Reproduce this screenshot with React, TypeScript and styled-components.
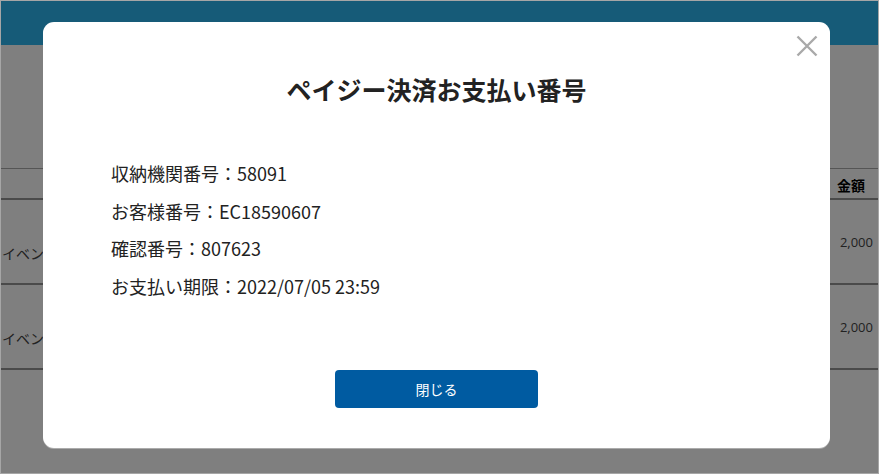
import React from "react";
import styled, { createGlobalStyle } from "styled-components";

const Global = createGlobalStyle`
  html, body { margin: 0; padding: 0; background: #fff; }
  body { font-family: "Noto Sans CJK JP", "Noto Sans", sans-serif; }
  * { box-sizing: border-box; }
`;

const Frame = styled.div`
  position: relative;
  width: 879px;
  height: 474px;
  border: 1px solid #a6a6a6;
  overflow: hidden;
  background: #fff;
`;

const Page = styled.div`
  display: flex;
  flex-direction: column;
  height: 100%;
`;

const Header = styled.header`
  height: 44px;
  background: #2cb6f0;
`;

const Spacer = styled.div`
  height: 123px;
`;

const Table = styled.div`
  display: flex;
  flex-direction: column;
  border-top: 1px solid #aaa;
`;

const Row = styled.div<{ $head?: boolean }>`
  display: flex;
  align-items: center;
  justify-content: space-between;
  height: ${(p) => (p.$head ? "31px" : "85px")};
  padding-top: ${(p) => (p.$head ? "3px" : "0")};
  border-bottom: 2px solid #959595;
  font-size: ${(p) => (p.$head ? "14px" : "13px")};
  font-weight: ${(p) => (p.$head ? 600 : 400)};
  color: ${(p) => (p.$head ? "#000" : "#444")};
`;

const NameCell = styled.span`
  padding-left: 1px;
  margin-top: 22px;
  font-size: 14px;
  white-space: nowrap;
  font-family: "Noto Sans CJK JP", sans-serif;
`;

const AmountCell = styled.span<{ $head?: boolean }>`
  padding-right: ${(p) => (p.$head ? "13px" : "5px")};
  font-family: ${(p) => (p.$head ? `"Noto Sans CJK JP", sans-serif` : `"Open Sans", sans-serif`)};
`;

const Overlay = styled.div`
  position: absolute;
  inset: 0;
  background: rgba(0, 0, 0, 0.5);
  padding: 21px 48px 25px 42px;
  display: flex;
`;

const Modal = styled.div`
  position: relative;
  flex: 1;
  background: #fff;
  border-radius: 11px;
  box-shadow: 0 1px 0 rgba(255, 255, 255, 0.35);
  padding: 49px 68px 40px;
  display: flex;
  flex-direction: column;
  color: #222;
`;

const CloseButton = styled.button`
  position: absolute;
  top: 13px;
  right: 12px;
  width: 22px;
  height: 22px;
  padding: 0;
  border: none;
  background: transparent;
  cursor: pointer;
  display: flex;
`;

const Title = styled.h2`
  margin: 0;
  text-align: center;
  font-size: 25px;
  line-height: 36px;
  font-weight: 700;
  color: #222;
`;

const InfoList = styled.div`
  margin-top: 48px;
  display: flex;
  flex-direction: column;
`;

const InfoLine = styled.div`
  font-size: 18px;
  line-height: 37.5px;
  color: #222;
`;

const Footer = styled.div`
  margin-top: auto;
  display: flex;
  justify-content: center;
`;

const PrimaryButton = styled.button`
  width: 203px;
  height: 38px;
  border: none;
  border-radius: 4px;
  background: #005ba1;
  color: #fff;
  font-family: "Noto Sans CJK JP", sans-serif;
  font-size: 14px;
  cursor: pointer;
`;

const CloseIcon = () => (
  <svg width="22" height="22" viewBox="0 0 22 22">
    <path d="M1.5 1.5 L20.5 20.5 M20.5 1.5 L1.5 20.5" stroke="#a9a9a9" strokeWidth="2.4" fill="none" />
  </svg>
);

const rows = [
  { name: "イベント", amount: "2,000" },
  { name: "イベント", amount: "2,000" },
];

const info = [
  "収納機関番号：58091",
  "お客様番号：EC18590607",
  "確認番号：807623",
  "お支払い期限：2022/07/05 23:59",
];

export default function App() {
  return (
    <>
      <Global />
      <Frame>
        <Page>
          <Header />
          <Spacer />
          <Table>
            <Row $head>
              <NameCell />
              <AmountCell $head>金額</AmountCell>
            </Row>
            {rows.map((r, i) => (
              <Row key={i}>
                <NameCell>{r.name}</NameCell>
                <AmountCell>{r.amount}</AmountCell>
              </Row>
            ))}
          </Table>
        </Page>
        <Overlay>
          <Modal>
            <CloseButton aria-label="閉じる">
              <CloseIcon />
            </CloseButton>
            <Title>ペイジー決済お支払い番号</Title>
            <InfoList>
              {info.map((t) => (
                <InfoLine key={t}>{t}</InfoLine>
              ))}
            </InfoList>
            <Footer>
              <PrimaryButton>閉じる</PrimaryButton>
            </Footer>
          </Modal>
        </Overlay>
      </Frame>
    </>
  );
}
